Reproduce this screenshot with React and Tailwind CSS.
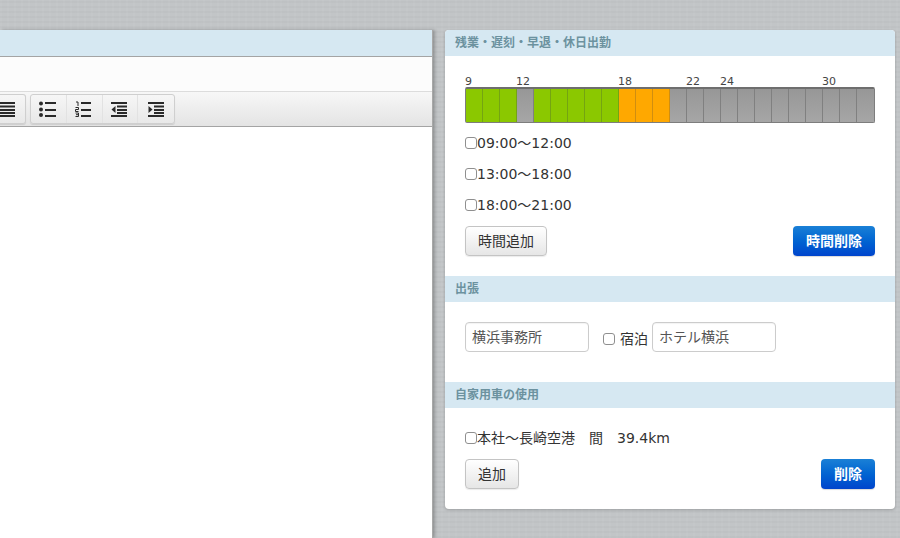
import React from 'react';

const cells = ['g','g','g','n','g','g','g','g','g','o','o','o','n','n','n','n','n','n','n','n','n','n','n','n'];
const labels = { 0: '9', 3: '12', 9: '18', 13: '22', 15: '24', 21: '30' };

const ink = '#2a2a2a';

const Lines = ({ items }) => items.map(([x, y, w], i) => (
  <rect key={i} x={x} y={y} width={w} height="2" fill={ink} />
));

const BulletIcon = () => (
  <svg width="18" height="16" viewBox="0 0 18 16">
    <circle cx="2" cy="2.5" r="2" fill={ink} />
    <circle cx="2" cy="8.5" r="2" fill={ink} />
    <circle cx="2" cy="14" r="2" fill={ink} />
    <Lines items={[[6, 1, 11], [6, 8, 11], [6, 14, 11]]} />
  </svg>
);

const NumberIcon = () => (
  <svg width="18" height="16" viewBox="0 0 18 16">
    <path d="M1 1h2v4M0.5 6.5h3v2h-3v2h3M0.5 12h3v3.5h-3M1 13.7h2.5" fill="none" stroke={ink} strokeWidth="1" />
    <Lines items={[[6, 1, 10], [6, 8, 10], [6, 14, 10]]} />
  </svg>
);

const OutdentIcon = () => (
  <svg width="17" height="16" viewBox="0 0 17 16">
    <Lines items={[[0, 1, 16], [6, 4.5, 10], [6, 8, 10], [6, 11, 10], [0, 14, 16]]} />
    <path d="M0.5 8.5 L4.5 5 V12 Z" fill={ink} />
  </svg>
);

const IndentIcon = () => (
  <svg width="17" height="16" viewBox="0 0 17 16">
    <Lines items={[[0, 1, 16], [6, 4.5, 10], [6, 8, 10], [6, 11, 10], [0, 14, 16]]} />
    <path d="M4.5 8.5 L0.5 5 V12 Z" fill={ink} />
  </svg>
);

const JustifyIcon = () => (
  <svg width="17" height="16" viewBox="0 0 17 16">
    <Lines items={[[0, 1, 16], [0, 4.5, 16], [0, 8, 16], [0, 11, 16], [0, 14, 16]]} />
  </svg>
);

const ToolButton = ({ children }) => (
  <div className="w-9 h-full flex items-center justify-center border-r border-[#e2e2e2] last:border-r-0">
    {children}
  </div>
);

const SectionHeader = ({ children }) => (
  <div className="h-[26px] bg-[#d6e8f2] px-[10px] flex items-center text-[12px] font-bold text-[#6c929f]">
    {children}
  </div>
);

const Check = () => (
  <span className="inline-block w-3 h-3 shrink-0 rounded-[3px] border border-[#8f8f8f] bg-white" />
);

const TimeRow = ({ children }) => (
  <div className="h-[31px] flex items-center text-[14px] text-[#333] leading-none">
    <Check />
    <span>{children}</span>
  </div>
);

const GrayButton = ({ children }) => (
  <button className="h-[30px] px-3 text-[14px] text-[#333] border border-[#c4c4c4] rounded-[4px] bg-gradient-to-b from-white to-[#e6e6e6] shadow-[0_1px_1px_rgba(0,0,0,0.08)]">
    {children}
  </button>
);

const BlueButton = ({ children }) => (
  <button className="h-[30px] px-[13px] text-[14px] font-bold text-white rounded-[4px] bg-gradient-to-b from-[#1a80d6] to-[#0044cc] shadow-[0_1px_1px_rgba(0,0,0,0.15)]">
    {children}
  </button>
);

const TextBox = ({ value }) => (
  <input
    readOnly
    value={value}
    className="w-[124px] h-[30px] px-[6px] pb-[2px] text-[14px] text-[#555] bg-white border border-[#ccc] rounded-[4px] outline-none shadow-[inset_0_1px_1px_rgba(0,0,0,0.05)]"
  />
);

export default function App() {
  return (
    <div className="w-[900px] h-[538px] overflow-hidden flex gap-3 pt-[30px] font-['DejaVu_Sans','Noto_Sans_CJK_JP',sans-serif] bg-[#c2c5c7] bg-[repeating-linear-gradient(0deg,rgba(0,0,0,0.018)_0px,rgba(0,0,0,0.018)_2px,transparent_2px,transparent_5px),repeating-linear-gradient(90deg,rgba(255,255,255,0.035)_0px,rgba(255,255,255,0.035)_2px,transparent_2px,transparent_7px)]">
      {/* editor panel */}
      <div className="w-[433px] h-[508px] shrink-0 flex flex-col bg-white border-r border-[#a8a8a8] shadow-[2px_0_3px_rgba(0,0,0,0.25)]">
        <div className="h-[26px] bg-[#d6e8f2] border-b border-[#a4a4a4] box-content" />
        <div className="h-[34px] bg-[#fcfcfc] border-b border-[#dcdcdc] box-content" />
        <div className="h-[34px] flex items-center gap-1 bg-gradient-to-b from-[#f7f7f7] to-[#e4e4e4] border-b border-[#a4a4a4] box-content">
          <div className="w-[26px] h-[30px] flex items-center justify-end pr-[9px] border border-l-0 border-[#cfcfcf] rounded-r-[3px] bg-gradient-to-b from-[#f6f6f6] to-[#e8e8e8] shadow-[0_1px_1px_rgba(0,0,0,0.1)] overflow-hidden">
            <div className="shrink-0"><JustifyIcon /></div>
          </div>
          <div className="w-[145px] h-[30px] flex border border-[#cfcfcf] rounded-[3px] bg-gradient-to-b from-[#f6f6f6] to-[#e8e8e8] shadow-[0_1px_1px_rgba(0,0,0,0.1)]">
            <ToolButton><BulletIcon /></ToolButton>
            <ToolButton><NumberIcon /></ToolButton>
            <ToolButton><OutdentIcon /></ToolButton>
            <ToolButton><IndentIcon /></ToolButton>
          </div>
        </div>
        <div className="flex-1 bg-white" />
      </div>

      {/* side panel */}
      <div className="w-[450px] h-[479px] shrink-0 bg-white rounded-[4px] overflow-hidden shadow-[0_1px_3px_rgba(0,0,0,0.2)]">
        <SectionHeader>残業・遅刻・早退・休日出勤</SectionHeader>
        <div className="h-[220px] px-5 pt-5">
          <div className="flex h-[11px] text-[11px] leading-3 text-[#444]">
            {cells.map((_, i) => (
              <div key={i} className="w-[17px] shrink-0 whitespace-nowrap">{labels[i]}</div>
            ))}
          </div>
          <div className="w-[410px] h-[36px] flex border border-[#7d7d7d] border-t-2 border-t-[#6e6e6e] rounded-[2px]">
            {cells.map((c, i) => (
              <div
                key={i}
                className={`w-[17px] shrink-0 border-r last:border-r-0 ${
                  c === 'g'
                    ? 'bg-[#8bc800] border-[#74a412]'
                    : c === 'o'
                    ? 'bg-[#ffa800] border-[#d08e10]'
                    : 'bg-gradient-to-b from-[#979797] to-[#a6a6a6] border-[#808080]'
                }`}
              />
            ))}
          </div>
          <div className="mt-[4px]">
            <TimeRow>09:00〜12:00</TimeRow>
            <TimeRow>13:00〜18:00</TimeRow>
            <TimeRow>18:00〜21:00</TimeRow>
          </div>
          <div className="mt-[6px] flex justify-between">
            <GrayButton>時間追加</GrayButton>
            <BlueButton>時間削除</BlueButton>
          </div>
        </div>

        <SectionHeader>出張</SectionHeader>
        <div className="h-[80px] px-5 pt-5 flex items-start">
          <TextBox value="横浜事務所" />
          <div className="ml-[14px] mr-1 h-[34px] flex items-center text-[14px] text-[#333]">
            <Check />
            <span className="ml-[5px]">宿泊</span>
          </div>
          <TextBox value="ホテル横浜" />
        </div>

        <SectionHeader>自家用車の使用</SectionHeader>
        <div className="px-5 pt-[14px]">
          <TimeRow>本社〜長崎空港　間　39.4km</TimeRow>
          <div className="mt-[6px] flex justify-between">
            <GrayButton>追加</GrayButton>
            <BlueButton>削除</BlueButton>
          </div>
        </div>
      </div>
    </div>
  );
}
